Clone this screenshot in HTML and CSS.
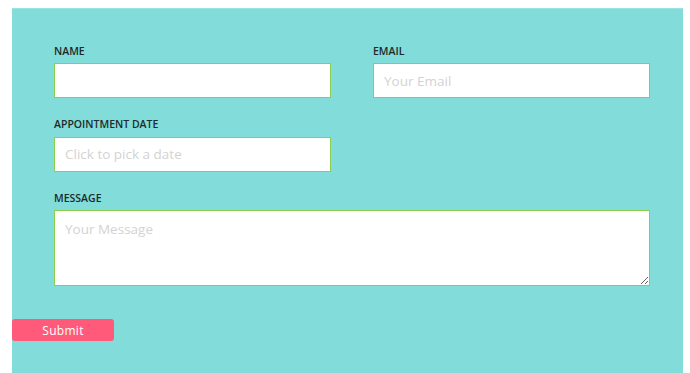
FILE: index.html
```html
<!DOCTYPE html>
<html lang="en">
<head>
    <meta charset="UTF-8">
    <meta name="viewport" content="width=device-width, initial-scale=1.0">
    <title>Appointment</title>
    <link rel="stylesheet" href="styles.css">
</head>
<body>
    <form class="panel">
        <div class="fields">
            <div class="form-group">
                <label for="name">Name</label>
                <input type="text" id="name">
            </div>
            <div class="form-group">
                <label for="email">Email</label>
                <input type="email" id="email" placeholder="Your Email">
            </div>
            <div class="form-group">
                <label for="date">Appointment Date</label>
                <input type="text" id="date" placeholder="Click to pick a date">
            </div>
            <div class="form-group wide">
                <label for="message">Message</label>
                <textarea id="message" placeholder="Your Message"></textarea>
            </div>
        </div>
        <button type="submit">Submit</button>
    </form>
</body>
</html>
```

FILE: styles.css
```css
body {
    margin: 8px 7px 0 12px;
    background: #fff;
    font-family: "Open Sans", "Noto Sans", Arial, sans-serif;
}
.panel {
    background: #82dcd9;
    border-top: 1px solid #9be3e0;
    height: 365px;
    box-sizing: border-box;
    padding-top: 35.5px;
}
.fields {
    display: grid;
    grid-template-columns: 277px 277px;
    column-gap: 42px;
    row-gap: 20px;
    padding-left: 42px;
}
.form-group.wide {
    grid-column: 1 / 3;
}
label {
    display: block;
    font-size: 10.5px;
    line-height: 13px;
    font-weight: 600;
    text-transform: uppercase;
    color: #1d2b2b;
    margin-bottom: 5.5px;
}
input, textarea {
    display: block;
    width: 100%;
    box-sizing: border-box;
    border: 1px solid #8bcf4f;
    background: #fff;
    font-family: inherit;
    font-size: 13.5px;
    padding: 0 10px;
    margin: 0;
    outline: none;
}
input {
    height: 35px;
}
textarea {
    height: 76px;
    padding-top: 9px;
    resize: vertical;
}
input::placeholder, textarea::placeholder {
    color: #d3d3d3;
}
button {
    display: block;
    margin-top: 33px;
    width: 102px;
    height: 22px;
    border: none;
    border-radius: 3px;
    background: #ff5a7a;
    color: #fff;
    font-family: inherit;
    font-size: 12px;
    letter-spacing: 0.3px;
    padding: 0;
    cursor: pointer;
}
```
